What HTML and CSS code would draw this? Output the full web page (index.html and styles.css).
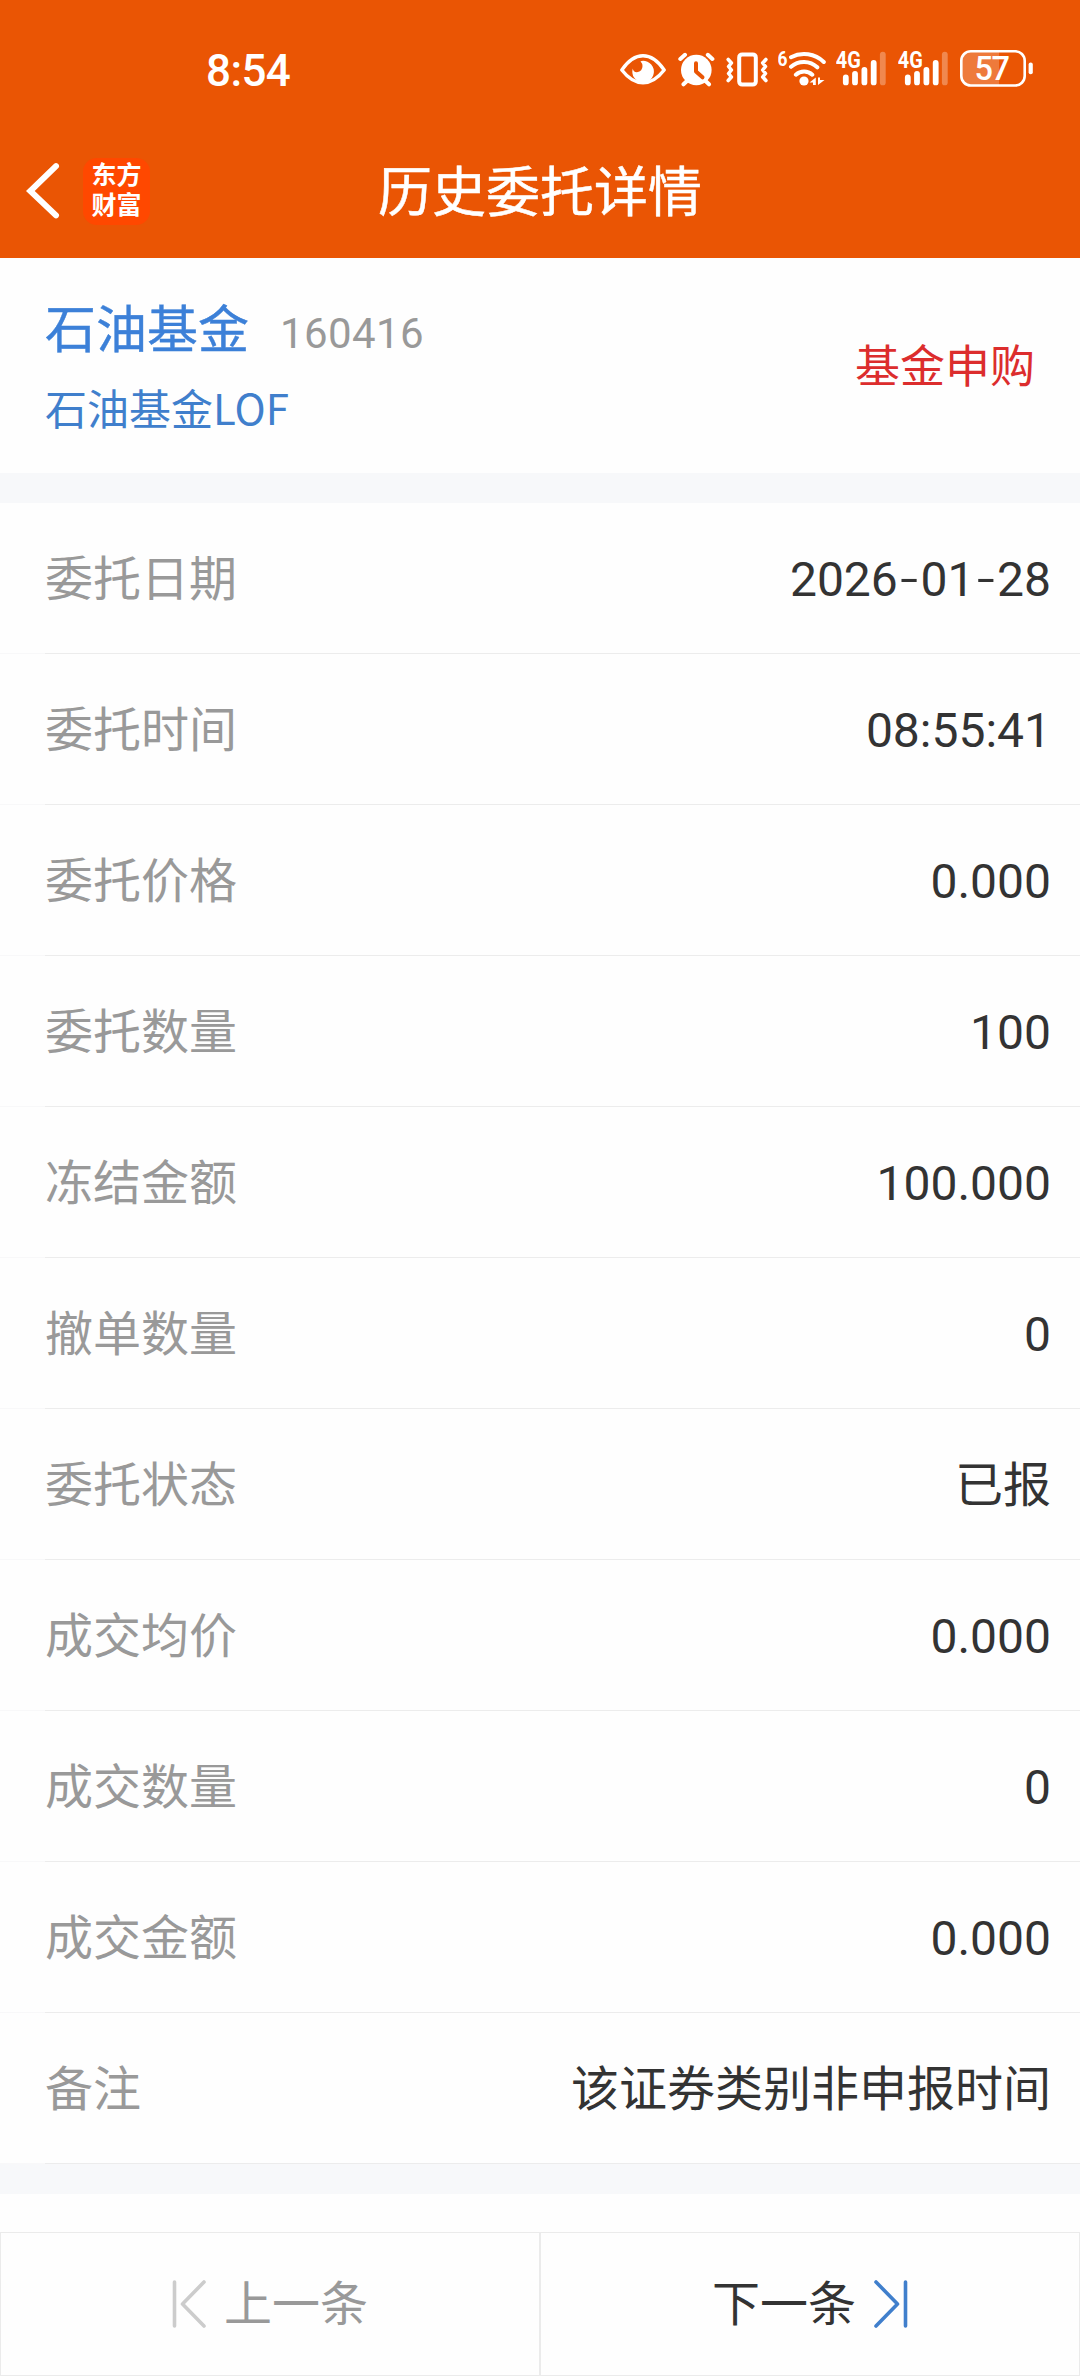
FILE: index.html
```
<!DOCTYPE html>
<html lang="zh-CN">
<head>
  <meta charset="UTF-8">
  <title>历史委托详情</title>
  <link rel="stylesheet" href="styles.css">
</head>
<body>
  <header class="header">
    <div class="status-bar">
      <span class="clock">8:54</span>
      <div class="status-icons">
        <svg class="icon-eye" width="46" height="42" viewBox="0 0 46 42">
          <path d="M1.8 22C8 13 15 7.8 23 7.8S38 13 44.2 22C38 30 31 34.8 23 34.8S8 30 1.8 22Z" fill="none" stroke="#fff" stroke-width="3.4" stroke-linejoin="round"/>
          <path d="M20.5 13.2A10.8 10.8 0 1 1 12.8 20.5Q13.2 24.3 17 24.2Q22.5 23.5 22.5 18Q22.5 15.5 20.5 13.2Z" fill="#fff"/>
        </svg>
        <svg class="icon-alarm" width="37" height="42" viewBox="0 0 37 42">
          <circle cx="18.3" cy="22" r="15.3" fill="#fff"/>
          <path d="M2.3 11L7 6.8M29.8 6.8L34.4 11M5.5 36.3L10 32M31 36.3L26.5 32" stroke="#fff" stroke-width="4" stroke-linecap="round"/>
          <path d="M18 15.2V23.5L24.5 29.3" fill="none" stroke="#ea5504" stroke-width="4" stroke-linecap="round" stroke-linejoin="round"/>
        </svg>
        <svg class="icon-vibrate" width="42" height="42" viewBox="0 0 42 42">
          <rect x="13.2" y="6.4" width="16.6" height="30.2" rx="3" fill="none" stroke="#fff" stroke-width="4"/>
          <path d="M2.2 11.5L5.4 15L2.6 18.5L5.4 22L2.6 25.5L5.4 29L2.2 32.5M39.9 11.5L36.7 15L39.5 18.5L36.7 22L39.5 25.5L36.7 29L39.9 32.5" fill="none" stroke="#fff" stroke-width="3.6" stroke-linecap="round" stroke-linejoin="round"/>
        </svg>
        <svg class="icon-wifi" width="48" height="42" viewBox="0 0 48 42">
          <text class="tag" x="-0.6" y="17.8" font-size="21" textLength="10" lengthAdjust="spacingAndGlyphs">6</text>
          <path d="M13 9.2A28.5 28.5 0 0 1 45.8 14M13 18.8A19.5 19.5 0 0 1 39.3 19.3M17.9 26.7A12 12 0 0 1 34.3 26.7" fill="none" stroke="#fff" stroke-width="4" stroke-linecap="round"/>
          <circle cx="26" cy="33" r="4.6" fill="#fff"/>
          <path d="M31.5 34.5L37.8 29.5V37H35V34.5ZM40 37V29.5H42V32H46.5Z" fill="#fff"/>
        </svg>
        <svg class="icon-signal" width="50" height="42" viewBox="0 0 50 42">
          <text class="tag" x="-0.3" y="19.8" font-size="23" textLength="25" lengthAdjust="spacingAndGlyphs">4G</text>
          <path d="M9.8 29.4V34.4M19 25.8V34.4M28.4 21.8V34.4M37.7 15V34.4" stroke="#fff" stroke-width="5.8" stroke-linecap="round"/>
          <path d="M46.8 6.6V34.4" stroke="#fff" stroke-opacity=".3" stroke-width="5.8" stroke-linecap="round"/>
        </svg>
        <svg class="icon-signal" width="50" height="42" viewBox="0 0 50 42">
          <text class="tag" x="-0.3" y="19.8" font-size="23" textLength="25" lengthAdjust="spacingAndGlyphs">4G</text>
          <path d="M9.8 29.4V34.4M19 25.8V34.4M28.4 21.8V34.4M37.7 15V34.4" stroke="#fff" stroke-width="5.8" stroke-linecap="round"/>
          <path d="M46.8 6.6V34.4" stroke="#fff" stroke-opacity=".3" stroke-width="5.8" stroke-linecap="round"/>
        </svg>
        <svg class="icon-battery" width="74" height="42" viewBox="0 0 74 42">
          <path d="M39 3.5H11A9 9 0 0 0 2 12.5V28.5A9 9 0 0 0 11 37.5H39Z" fill="#fff" fill-opacity=".22"/>
          <rect x="1.3" y="3.2" width="63.4" height="34.3" rx="9.5" fill="none" stroke="#fff" stroke-width="2.6"/>
          <rect x="68.6" y="14.6" width="4.2" height="11.6" rx="2" fill="#fff"/>
          <text class="tag battery-level" x="14.6" y="32" font-size="32.5" textLength="35.5">57</text>
        </svg>
      </div>
    </div>
    <div class="nav-bar">
      <div class="nav-left">
        <svg width="34" height="58" viewBox="0 0 34 58">
          <path d="M30 4.2L4.3 29L30 53.4" fill="none" stroke="#fff" stroke-width="6" stroke-linecap="round"/>
        </svg>
        <div class="logo"><span>东方</span><span>财富</span></div>
      </div>
      <div class="nav-title">历史委托详情</div>
    </div>
  </header>

  <section class="fund">
    <div>
      <div class="fund-name">石油基金<span class="fund-code">160416</span></div>
      <div class="fund-full">石油基金<span class="fund-suffix">LOF</span></div>
    </div>
    <div class="fund-type">基金申购</div>
  </section>

  <ul class="detail">
    <li class="row"><span class="label">委托日期</span><span>2026<i class="dash">-</i>01<i class="dash">-</i>28</span></li>
    <li class="row"><span class="label">委托时间</span><span>08:55:41</span></li>
    <li class="row"><span class="label">委托价格</span><span>0.000</span></li>
    <li class="row"><span class="label">委托数量</span><span>100</span></li>
    <li class="row"><span class="label">冻结金额</span><span>100.000</span></li>
    <li class="row"><span class="label">撤单数量</span><span>0</span></li>
    <li class="row"><span class="label">委托状态</span><span>已报</span></li>
    <li class="row"><span class="label">成交均价</span><span>0.000</span></li>
    <li class="row"><span class="label">成交数量</span><span>0</span></li>
    <li class="row"><span class="label">成交金额</span><span>0.000</span></li>
    <li class="row"><span class="label">备注</span><span>该证券类别非申报时间</span></li>
  </ul>

  <footer class="pager">
    <div class="pager-btn disabled">
      <svg width="34" height="48" viewBox="0 0 34 48">
        <path d="M2.5 2V46M32 2L10.5 24L32 46" fill="none" stroke="#ccc" stroke-width="3.6" stroke-linecap="round" stroke-linejoin="round"/>
      </svg>
      <span class="pager-text">上一条</span>
    </div>
    <div class="pager-btn">
      <span class="pager-text">下一条</span>
      <svg width="34" height="48" viewBox="0 0 34 48">
        <path d="M31.5 2V46M2 2L23.5 24L2 46" fill="none" stroke="#407fcc" stroke-width="3.6" stroke-linecap="round" stroke-linejoin="round"/>
      </svg>
    </div>
  </footer>
</body>
</html>
```

FILE: styles.css
```
* {
  box-sizing: border-box;
}

body {
  margin: 0;
  width: 1080px;
  background-color: #fefefe;
  color: #333;
  font-family: Roboto, "Noto Sans CJK SC", sans-serif;
  font-size: 48px;
  line-height: 60px;
}

svg {
  display: block;
  flex-shrink: 0;
}

.header {
  height: 258px;
  background-color: #ea5504;
  color: #fff;
}

.status-bar {
  display: flex;
  justify-content: space-between;
  height: 124px;
  padding: 41px 46px 0 206px;
}

.clock {
  font-size: 44px;
  font-weight: 500;
  letter-spacing: -0.6px;
}

.status-icons {
  display: flex;
  padding-top: 7px;
}

.icon-eye {
  margin-right: 11px;
}

.icon-alarm {
  margin: 0 11px 0 1px;
}

.icon-vibrate,
.icon-wifi {
  margin-right: 10px;
}

.icon-signal {
  margin-right: 12px;
}

.tag {
  fill: #fff;
  font-weight: 700;
}

.battery-level {
  font-weight: 500;
}

.nav-bar {
  display: grid;
  grid-template-columns: 1fr auto 1fr;
  align-items: center;
  height: 134px;
}

.nav-left {
  display: flex;
  align-items: center;
  gap: 23px;
  padding-left: 26px;
}

.logo {
  display: flex;
  flex-direction: column;
  justify-content: center;
  align-items: center;
  width: 67px;
  height: 67px;
  border-radius: 14px;
  background-color: #ff4800;
  font-size: 25px;
  font-weight: 700;
  line-height: 30px;
}

.nav-title {
  padding-top: 6px;
  font-size: 54px;
  -webkit-text-stroke: 0.5px #fff;
}

.fund {
  display: flex;
  justify-content: space-between;
  height: 215px;
  padding: 43px 45px 0;
}

.fund-name {
  color: #3c80d8;
  font-size: 51px;
  -webkit-text-stroke: 0.4px #3c80d8;
}

.fund-code {
  margin-left: 31px;
  color: #999;
  font-size: 42px;
  letter-spacing: 0.4px;
  -webkit-text-stroke: 0;
}

.fund-full {
  margin-top: 17px;
  color: #407fcc;
  font-size: 42px;
  line-height: 52px;
}

.fund-suffix {
  font-family: "Noto Sans CJK SC", sans-serif;
}

.fund-type {
  margin-top: 37px;
  color: #dc2d2d;
  font-size: 45px;
}

.detail {
  margin: 0;
  padding: 0;
  list-style: none;
  border-top: 30px solid #f7f8fa;
  border-bottom: 30px solid #f7f8fa;
}

.row {
  display: flex;
  justify-content: space-between;
  align-items: center;
  height: 151px;
  padding: 2px 29px 0 45px;
  /* divider is almost invisible under the left padding */
  background: linear-gradient(to right, #f8f8f9 45px, #ececec 45px) bottom / 100% 1px no-repeat;
}

.label {
  color: #999;
}

.dash {
  font-family: Inter, sans-serif;
  font-style: normal;
  font-weight: 300;
  font-size: 50px;
  line-height: 0;
}

.pager {
  display: flex;
  margin-top: 38px;
}

.pager-btn {
  display: flex;
  flex: 1;
  justify-content: center;
  align-items: center;
  gap: 18px;
  height: 144px;
  border: 1px solid #ebebeb;
}

.pager-text {
  padding-top: 2px;
}

.disabled {
  color: #999;
}
```
